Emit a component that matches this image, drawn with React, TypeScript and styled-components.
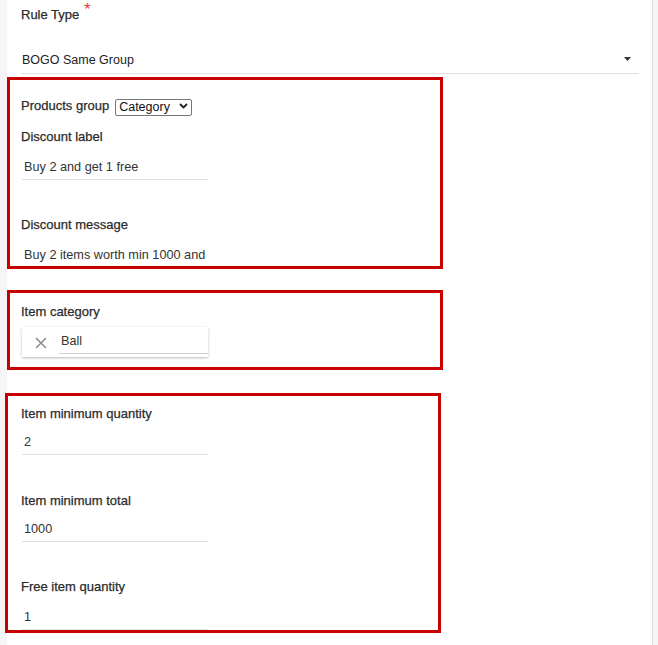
import React from "react";
import styled, { createGlobalStyle } from "styled-components";

const GlobalStyle = createGlobalStyle`
  html, body {
    margin: 0;
    padding: 0;
    background: #f5f5f5;
  }
  body {
    font-family: "Liberation Sans", Arial, Helvetica, sans-serif;
    color: #333;
  }
  * { box-sizing: border-box; }
`;

const Panel = styled.div`
  margin-left: 7px;
  width: 646px;
  min-height: 645px;
  background: #fff;
  border-right: 1px solid #dcdcdc;
  padding-top: 7px;
  padding-bottom: 1px;
`;

const RuleField = styled.div`
  padding: 0 13px 0 14px;
`;

const Label = styled.label`
  display: block;
  font-size: 13px;
  line-height: 16px;
  color: #2b2b2b;
  -webkit-text-stroke: 0.25px #2b2b2b;
  white-space: nowrap;
`;

const Required = styled.span`
  display: inline-block;
  margin-left: 5px;
  font-size: 16px;
  line-height: 10px;
  color: #e53935;
  -webkit-text-stroke: 0;
  position: relative;
  top: -4px;
`;

const RuleSelect = styled.div`
  margin: 27px 0 0 0;
  padding: 0 8px 3px 1px;
  height: 24px;
  border-bottom: 1px solid #e0e0e0;
  display: flex;
  justify-content: space-between;
  align-items: flex-start;
  font-size: 12.5px;
  line-height: 20px;
  color: #222;
`;

const Caret = styled.svg`
  margin-top: 7px;
  flex: none;
`;

const Section = styled.section<{ $top: number; $left?: number; $padTop: number; $padBottom: number }>`
  position: relative;
  width: 436px;
  margin-top: ${(p) => p.$top}px;
  margin-left: ${(p) => p.$left ?? 0}px;
  padding: ${(p) => p.$padTop}px 0 ${(p) => p.$padBottom}px ${(p) => 14 - (p.$left ?? 0)}px;
  outline: 3px solid #c70000;
  outline-offset: -3px;
`;

const GroupRow = styled.div`
  display: flex;
  align-items: center;
  gap: 6px;
  height: 17px;
`;

const SelectWrap = styled.span`
  position: relative;
  display: inline-block;
  height: 17px;
`;

const NativeSelect = styled.select`
  appearance: none;
  -webkit-appearance: none;
  width: 77px;
  height: 17px;
  margin: 0;
  padding: 0 18px 0 3px;
  border: 1px solid #767676;
  border-radius: 2px;
  background: #fff;
  font-family: "Liberation Sans", Arial, sans-serif;
  font-size: 12.5px;
  line-height: 15px;
  color: #111;
`;

const Chevron = styled.svg`
  position: absolute;
  left: 64px;
  top: 6px;
  pointer-events: none;
`;

const Field = styled.div<{ $top: number; $gap: number }>`
  margin-top: ${(p) => p.$top}px;
  display: flex;
  flex-direction: column;
  gap: ${(p) => p.$gap}px;
`;

const TextInput = styled.input`
  display: block;
  width: 186px;
  height: 25px;
  margin: 0 0 0 1px;
  padding: 0 2px;
  border: none;
  border-bottom: 1px solid #e0e0e0;
  outline: none;
  background: transparent;
  font-family: "Liberation Sans", Arial, sans-serif;
  font-size: 12.7px;
  color: #333;
`;

const ChipBox = styled.div`
  margin: 7px 0 0 1px;
  width: 186px;
  height: 30px;
  display: flex;
  align-items: flex-start;
  background: #fff;
  box-shadow: 0 1px 3px rgba(0, 0, 0, 0.22), 0 1px 1px rgba(0, 0, 0, 0.06);
`;

const RemoveIcon = styled.svg`
  flex: none;
  margin: 10px 0 0 13px;
`;

const ChipInput = styled.input`
  flex: 1;
  min-width: 0;
  height: 25px;
  margin: 2px 0 0 12px;
  padding: 0 2px;
  border: none;
  border-bottom: 1px solid #cfcfcf;
  outline: none;
  background: transparent;
  font-family: "Liberation Sans", Arial, sans-serif;
  font-size: 12.7px;
  color: #333;
`;

export default function App() {
  return (
    <>
      <GlobalStyle />
      <Panel>
        <RuleField>
          <Label>
            Rule Type<Required>*</Required>
          </Label>
          <RuleSelect>
            <span>BOGO Same Group</span>
            <Caret width="7" height="4" viewBox="0 0 7 4">
              <path d="M0 0 L7 0 L3.5 4 Z" fill="#333" />
            </Caret>
          </RuleSelect>
        </RuleField>

        <Section $top={3} $padTop={20} $padBottom={1}>
          <GroupRow>
            <Label>Products group</Label>
            <SelectWrap>
              <NativeSelect defaultValue="category">
                <option value="category">Category</option>
                <option value="product">Product</option>
              </NativeSelect>
              <Chevron width="9" height="6" viewBox="0 0 9 6">
                <path d="M1 1 L4.5 4.5 L8 1" fill="none" stroke="#222" strokeWidth="1.8" />
              </Chevron>
            </SelectWrap>
          </GroupRow>
          <Field $top={15} $gap={10}>
            <Label>Discount label</Label>
            <TextInput readOnly value="Buy 2 and get 1 free" />
          </Field>
          <Field $top={37} $gap={10}>
            <Label>Discount message</Label>
            <TextInput readOnly value="Buy 2 items worth min 1000 and get 1 free" />
          </Field>
        </Section>

        <Section $top={21} $padTop={14} $padBottom={13}>
          <Label>Item category</Label>
          <ChipBox>
            <RemoveIcon width="12" height="12" viewBox="0 0 12 12">
              <path d="M1 1 L11 11 M11 1 L1 11" stroke="#8a8a8a" strokeWidth="1.5" fill="none" />
            </RemoveIcon>
            <ChipInput readOnly value="Ball" />
          </ChipBox>
        </Section>

        <Section $top={23} $left={-2} $padTop={13} $padBottom={3}>
          <Field $top={0} $gap={8}>
            <Label>Item minimum quantity</Label>
            <TextInput readOnly value="2" />
          </Field>
          <Field $top={38} $gap={8}>
            <Label>Item minimum total</Label>
            <TextInput readOnly value="1000" />
          </Field>
          <Field $top={37} $gap={10}>
            <Label>Free item quantity</Label>
            <TextInput readOnly value="1" />
          </Field>
        </Section>
      </Panel>
    </>
  );
}
